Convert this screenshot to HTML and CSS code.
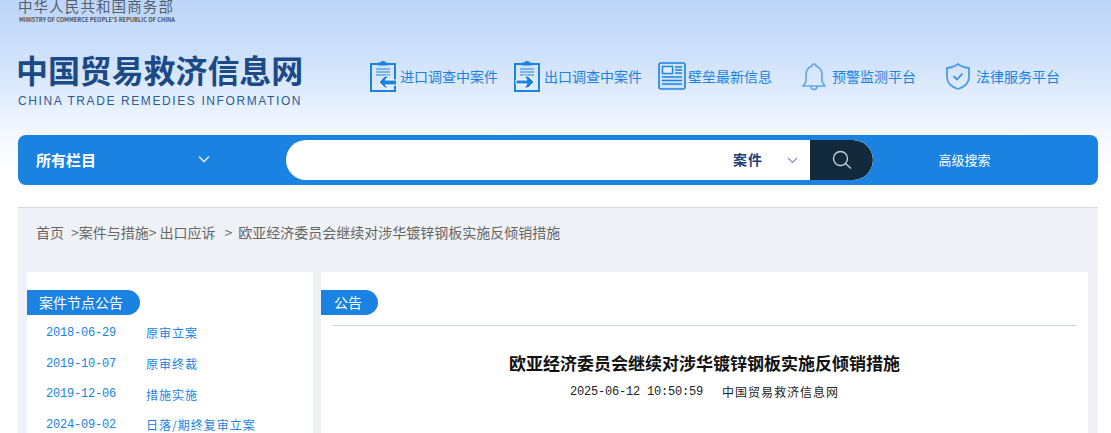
FILE: index.html
```html
<!DOCTYPE html>
<html lang="zh-CN">
<head>
<meta charset="utf-8">
<title>欧亚经济委员会继续对涉华镀锌钢板实施反倾销措施</title>
<link rel="stylesheet" href="styles.css">
</head>
<body>
<header class="header">
  <div class="ministry">
    <div class="ministry-cn">中华人民共和国商务部</div>
    <div class="ministry-en">MINISTRY OF COMMERCE PEOPLE'S REPUBLIC OF CHINA</div>
  </div>
  <div class="brand-row">
    <div class="brand">
      <div class="brand-cn">中国贸易救济信息网</div>
      <div class="brand-en">CHINA TRADE REMEDIES INFORMATION</div>
    </div>
    <nav class="quick-nav">
      <a class="quick-item quick-doc">
        <svg class="ico" width="26" height="31" viewBox="0 0 26 31" fill="none" stroke="#1a82e0">
          <path d="M8 3H1v27h24V3h-7" stroke-width="2"/>
          <path d="M8 4V2h3a2 2 0 0 1 4 0h3v2z" fill="#1a82e0" stroke-width="1"/>
          <path d="M6 8h14M6 11h14M6 14h14" stroke-width="1.200"/>
          <path d="M27 19H15l4-4h-4l-6 6 6 6h4l-4-3h12z" fill="#1a82e0" stroke="#fff" stroke-width="1"/>
        </svg>
        <span>进口调查中案件</span>
      </a>
      <a class="quick-item quick-doc">
        <svg class="ico" width="26" height="31" viewBox="0 0 26 31" fill="none" stroke="#1a82e0">
          <path d="M8 3H1v27h24V3h-7" stroke-width="2"/>
          <path d="M8 4V2h3a2 2 0 0 1 4 0h3v2z" fill="#1a82e0" stroke-width="1"/>
          <path d="M6 8h14M6 11h14M6 14h14" stroke-width="1.200"/>
          <path d="M2 19h11l-3-4h4l6 6-6 6h-4l3-4H2z" fill="#1a82e0" stroke="#fff" stroke-width="1"/>
        </svg>
        <span>出口调查中案件</span>
      </a>
      <a class="quick-item quick-tight">
        <svg class="ico" width="28" height="28" viewBox="0 0 28 28" fill="none" stroke="#1a82e0">
          <rect x="1" y="1" width="26" height="26" rx="2" fill="#cfe2fa" stroke-width="1.600"/>
          <rect x="4.500" y="4.500" width="10" height="7" fill="#e4effc" stroke-width="1.400"/>
          <path d="M17 5h7M17 8h7M17 11h7M4 15h20M4 18.500h20M4 22h20" stroke-width="1.500"/>
        </svg>
        <span>壁垒最新信息</span>
      </a>
      <a class="quick-item quick-wide">
        <svg class="ico" width="24" height="30" viewBox="0 0 24 30" fill="none" stroke="#5aa5ea" stroke-width="1.600">
          <path d="M10 5a2 2 0 0 1 4 0c4 1.500 6 4.500 6 9v6c0 2 2 3 3 5H1c1-2 3-3 3-5v-6c0-4.500 2-7.500 6-9z"/>
          <path d="M9 25.500a3 3 0 0 0 6 0"/>
        </svg>
        <span>预警监测平台</span>
      </a>
      <a class="quick-item quick-wide">
        <svg class="ico" width="24" height="27" viewBox="0 0 24 27" fill="none" stroke="#4a9ce8" stroke-width="1.800">
          <path d="M12 1c3 2.500 6 3.500 11 4v9c0 6-5 10-11 12C6 24 1 20 1 14V5c5-.5 8-1.500 11-4z"/>
          <path d="M7.500 13l3.500 3.500 5.500-6" stroke="#3f8fd8"/>
        </svg>
        <span>法律服务平台</span>
      </a>
    </nav>
  </div>
</header>

<form class="search-bar">
  <div class="scope">
    <span>所有栏目</span>
    <svg width="14" height="9" viewBox="0 0 14 9" fill="none" stroke="#d5e6fa" stroke-width="1.600"><path d="M2 1.500l5 5 5-5"/></svg>
  </div>
  <div class="pill">
    <div class="pill-field"></div>
    <div class="pill-type">
      <span>案件</span>
      <svg width="11" height="7" viewBox="0 0 11 7" fill="none" stroke="#8296b8" stroke-width="1.200"><path d="M1 1l4.500 4.500L10 1"/></svg>
    </div>
    <div class="pill-btn">
      <svg width="20" height="20" viewBox="0 0 20 20" fill="none" stroke="#c5ced6" stroke-width="1.400"><circle cx="8.500" cy="8.500" r="7"/><path d="M13.500 13.500l5.500 5"/></svg>
    </div>
  </div>
  <a class="advanced">高级搜索</a>
</form>

<main class="main">
  <div class="crumbs"><span>首页</span><span class="c2">&gt;案件与措施&gt;</span><span class="c3">出口应诉</span><span class="c4">&gt;</span><span class="c5">欧亚经济委员会继续对涉华镀锌钢板实施反倾销措施</span></div>
  <div class="columns">
    <aside class="card side">
      <div class="tab tab-side">案件节点公告</div>
      <ul class="events">
        <li><span class="date">2018-06-29</span><span class="ev">原审立案</span></li>
        <li><span class="date">2019-10-07</span><span class="ev">原审终裁</span></li>
        <li><span class="date">2019-12-06</span><span class="ev">措施实施</span></li>
        <li><span class="date">2024-09-02</span><span class="ev">日落/期终复审立案</span></li>
      </ul>
    </aside>
    <article class="card content">
      <div class="tab tab-main">公告</div>
      <div class="rule"></div>
      <h1 class="title">欧亚经济委员会继续对涉华镀锌钢板实施反倾销措施</h1>
      <div class="meta"><span class="stamp">2025-06-12 10:50:59</span><span class="source">中国贸易救济信息网</span></div>
    </article>
  </div>
</main>
</body>
</html>
```
FILE: styles.css
```css
* { box-sizing: border-box; }
html, body { margin: 0; padding: 0; height: 433px; overflow: hidden; }
body {
  width: 1111px;
  background: linear-gradient(180deg, #bdd5f8 0, #d0e2fb 60px, #e6f0fd 105px, #f5f8ff 135px, #ffffff 175px) no-repeat;
  background-size: 100% 175px;
  font-family: "Noto Sans CJK SC", "Liberation Sans", sans-serif;
  color: #333;
}
a { color: inherit; text-decoration: none; }
ul { list-style: none; margin: 0; padding: 0; }

.header { height: 135px; padding-left: 18px; }
.ministry { height: 26px; color: #555f6c; }
.ministry-cn { font-size: 14.500px; line-height: 12px; letter-spacing: 1.100px; height: 14px; white-space: nowrap; }
.ministry-en { font-size: 5.700px; font-weight: 700; line-height: 8px; margin-top: 2px; padding-left: 1px; white-space: nowrap; color: #4b5562; }

.brand-row { display: flex; margin-top: 23px; }
.brand { width: 352px; }
.brand-cn { font-size: 32px; font-weight: 700; line-height: 40px; letter-spacing: -0.100px; margin-left: -2px; color: #1c4a86; white-space: nowrap; }
.brand-en { font-size: 12px; line-height: 16px; letter-spacing: 1.600px; color: #2d5a94; white-space: nowrap; font-family: "Liberation Sans", sans-serif; margin-top: 4px; }

.quick-nav { display: flex; margin-top: 11px; height: 32px; }
.quick-item { width: 144px; display: flex; align-items: center; color: #1a82e0; font-size: 14px; white-space: nowrap; }
.quick-item .ico { flex: none; margin-right: 5px; }
.quick-item.quick-doc .ico { margin-right: 4px; }
.quick-item.quick-tight .ico { margin-right: 2px; }
.quick-item.quick-wide .ico { margin-right: 6px; }

.search-bar {
  margin: 0 0 0 18px;
  width: 1080px;
  height: 50px;
  background: #1a82e0;
  border-radius: 8px;
  display: flex;
  align-items: center;
  color: #fff;
}
.scope { width: 268px; height: 48px; padding: 0 75px 0 18px; margin-bottom: 2px; display: flex; justify-content: space-between; align-items: center; font-size: 15px; font-weight: 700; }
.pill { width: 587px; height: 40px; display: flex; background: #fff; border-radius: 20px; overflow: hidden; }
.pill-field { flex: 1; }
.pill-type { width: 77px; padding-bottom: 3px; display: flex; align-items: center; color: #1f3f78; font-size: 14px; font-weight: 700; letter-spacing: 1px; gap: 24px; }
.pill-type svg { margin-top: 3px; }
.pill-btn { width: 63px; background: #122a3b; border-radius: 0 20px 20px 0; display: flex; align-items: center; justify-content: center; }
.advanced { width: 183px; text-align: center; font-size: 13px; line-height: 36px; }

.main {
  margin: 22px 0 0 18px;
  width: 1080px;
  height: 300px;
  background: #eef2f6;
  border-top: 1px solid #d0dbe6;
  padding: 0 10px 0 9px;
}
.crumbs { display: flex; height: 64px; padding: 13px 0 0 9px; font-size: 14px; line-height: 22px; color: #666; white-space: nowrap; }
.c2 { margin-left: 7px; }
.c3 { margin-left: 3px; }
.c4 { margin-left: 9px; }
.c5 { margin-left: 6px; }

.columns { display: flex; gap: 8px; align-items: stretch; }
.card { background: #fff; height: 200px; padding-top: 18px; }
.side { width: 286px; }
.content { flex: 1; }
.tab { height: 25px; line-height: 25px; background: #1a82e0; color: #fff; font-size: 14px; border-radius: 0 13px 13px 0; }
.tab-side { width: 113px; padding-left: 12px; }
.tab-main { width: 57px; padding-left: 13px; }

.events { padding: 2.500px 0 0 19px; }
.events li { display: flex; height: 30.700px; align-items: center; color: #1a82e0; font-size: 12px; letter-spacing: 1px; }
.date { width: 100px; font-family: "Liberation Mono", monospace; font-size: 12px; letter-spacing: -.2px; }
.ev { white-space: nowrap; }

.rule { height: 1px; margin: 10px 11px 0; background: #d0d6e0; }
.title { margin: 25px 0 0; text-align: center; font-size: 17px; line-height: 24px; font-weight: 700; color: #111; white-space: nowrap; }
.meta { display: flex; justify-content: center; margin-top: 8px; font-size: 12px; letter-spacing: 1px; line-height: 18px; color: #222; }
.stamp { font-family: "Liberation Mono", monospace; font-size: 12px; letter-spacing: -.2px; white-space: pre; }
.source { margin-left: 19px; }
```
